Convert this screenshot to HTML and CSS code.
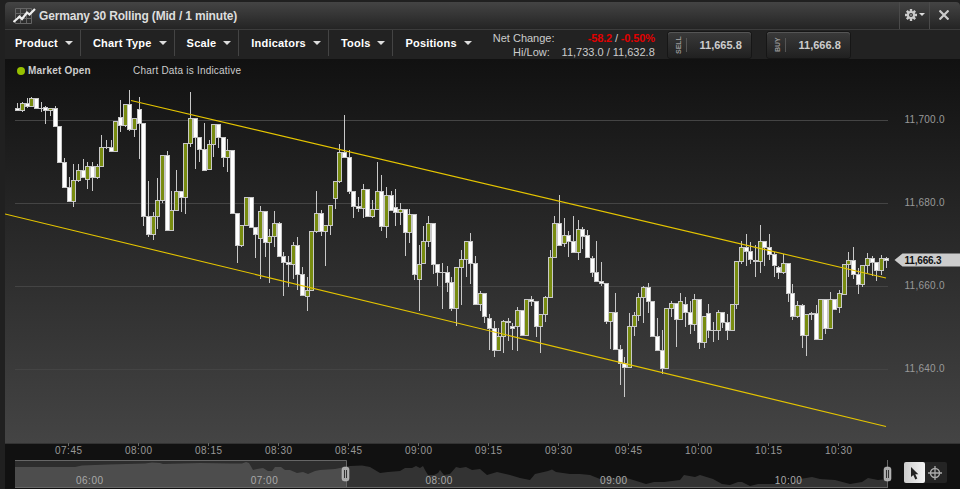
FILE: index.html
```html
<!DOCTYPE html>
<html lang="en">
<head>
    <meta charset="UTF-8">
    <meta name="viewport" content="width=device-width, initial-scale=1.0">
    <title>Germany 30 Rolling</title>
    <link rel="stylesheet" href="styles.css">
</head>
<body>
    <div class="window">
        <header class="titlebar">
            <svg class="logo" width="24" height="18" viewBox="0 0 24 18">
                <path d="M2.500 1.500h16v15h-16zM7.500 1v16M13.500 1v16M2 6.500h17M2 11.500h17" fill="none" stroke="#666"/>
                <path d="M0.500 15l4-3.500 2-2 2.500 2.500 5-6.500 2.500 2 5.500-5.500" fill="none" stroke="#eee" stroke-width="2.200"/>
            </svg>
            <h1>Germany 30 Rolling (Mid / 1 minute)</h1>
            <button class="title-button settings">
                <svg width="12" height="12" viewBox="-6 -6 12 12">
                    <path d="M0-6V6M-6 0H6M-4.200-4.200L4.200 4.200M4.200-4.200L-4.200 4.200" stroke="#ccc" stroke-width="2.400"/>
                    <circle r="4" fill="#ccc"/>
                    <circle r="2" fill="#333"/>
                    <circle r="0.800" fill="#ccc"/>
                </svg>
                <span class="caret small"></span>
            </button>
            <button class="title-button close">
                <svg width="10" height="10" viewBox="0 0 10 10">
                    <path d="M0.500 0.500l9 9M9.500 0.500l-9 9" stroke="#ccc" stroke-width="2.200"/>
                </svg>
            </button>
        </header>
        <div class="toolbar">
            <nav>
                <ul>
                    <li>Product<span class="caret"></span></li>
                    <li>Chart Type<span class="caret"></span></li>
                    <li>Scale<span class="caret"></span></li>
                    <li>Indicators<span class="caret"></span></li>
                    <li>Tools<span class="caret"></span></li>
                    <li>Positions<span class="caret"></span></li>
                </ul>
            </nav>
            <div class="summary">
                <span>Net Change:</span>
                <span class="change"><b>-58.2</b> / <b>-0.50%</b></span>
                <span class="hilo">Hi/Low:</span>
                <span>11,733.0 / 11,632.8</span>
            </div>
            <button class="price-button"><span class="side">SELL</span><span class="price">11,665.8</span></button>
            <button class="price-button"><span class="side">BUY</span><span class="price">11,666.8</span></button>
        </div>
        <main class="chart-area">
            <div class="status">
                <span class="dot"></span>
                <strong>Market Open</strong>
                <span class="note">Chart Data is Indicative</span>
            </div>
            <svg id="chart" width="955" height="353" viewBox="5 90 955 353"></svg>
        </main>
        <svg id="timeAxis" width="955" height="17" viewBox="5 443 955 17"></svg>
        <footer>
            <svg id="navigator" width="887" height="29" viewBox="5 460 887 29"></svg>
            <div class="modes">
                <button class="mode active">
                    <svg width="20" height="20" viewBox="0 0 20 20">
                        <path d="M7 4v10l2.300-2 2 4.500 2-1-2-4.200h3z" fill="#222"/>
                    </svg>
                </button>
                <button class="mode">
                    <svg width="20" height="20" viewBox="0 0 20 20">
                        <circle cx="10" cy="10" r="4.500" fill="none" stroke="#aaa" stroke-width="1.500"/>
                        <path d="M10 3v14M3 10h14" stroke="#aaa" stroke-width="1.300"/>
                    </svg>
                </button>
            </div>
        </footer>
    </div>
    <script src="chart.js"></script>
</body>
</html>
```
FILE: styles.css
```css
body {
    margin: 0;
    height: 489px;
    overflow: hidden;
    background: #202020;
    font-family: "Liberation Sans", Arial, sans-serif;
    font-size: 11px;
    color: #ccc;
}
button {
    font-family: inherit;
    padding: 0;
    border: none;
    color: inherit;
    cursor: pointer;
}
svg {
    display: block;
    flex: none;
}
.window {
    margin: 2px 0 0 5px;
    height: 487px;
    background: #111;
    border-radius: 4px 4px 0 0;
    overflow: hidden;
}
.titlebar {
    display: flex;
    align-items: center;
    height: 28px;
    box-sizing: border-box;
    border-bottom: 1px solid #3c3c3c;
    background: linear-gradient(#444, #242424);
}
.logo {
    margin-left: 8px;
}
h1 {
    flex: 1;
    margin: 0 0 0 2px;
    font-size: 12px;
    letter-spacing: -0.17px;
    color: #ddd;
    white-space: nowrap;
}
.title-button {
    display: flex;
    align-items: center;
    justify-content: center;
    gap: 2px;
    width: 30px;
    height: 27px;
    background: none;
    border-left: 1px solid #4a4a4a;
    box-sizing: border-box;
}
.title-button.close {
    width: 31px;
    padding: 0 3px 2px 0;
}
.title-button.settings {
    padding-bottom: 2px;
}
.caret {
    border: 4px solid transparent;
    border-top-color: #ddd;
    border-bottom: none;
}
.caret.small {
    border-width: 3px;
    border-bottom: none;
}
.toolbar {
    display: flex;
    height: 29px;
    background: #222;
}
nav ul {
    display: flex;
    list-style: none;
    margin: 0;
    padding: 0;
}
nav li {
    display: flex;
    align-items: center;
    gap: 7px;
    height: 26px;
    padding: 0 7px 0 12px;
    border-right: 1px solid #444;
    font-weight: bold;
    letter-spacing: 0.2px;
    color: #fff;
    white-space: nowrap;
}
nav li:first-child {
    padding-left: 10px;
}
nav li:last-child {
    border: none;
}
.summary {
    display: grid;
    grid-template-columns: 58px 104px;
    grid-auto-rows: 14px;
    width: 162px;
    margin: 1px 13px 0 14px;
    line-height: 14px;
    text-align: right;
    white-space: nowrap;
}
.summary b {
    color: #e00000;
}
.summary .change {
    letter-spacing: -0.15px;
}
.summary .hilo {
    padding-right: 1px;
}
.price-button {
    display: flex;
    align-items: center;
    width: 83px;
    height: 26px;
    margin: 2px 16px 0 0;
    border-radius: 3px;
    background: linear-gradient(#3a3a3a, #202020);
    box-shadow: inset 0 1px #555, 0 0 0 1px #161616;
}
.side {
    display: flex;
    align-items: center;
    justify-content: center;
    width: 12px;
    height: 14px;
    margin-left: 5px;
    padding-left: 1px;
    border-left: 1px solid #555;
    writing-mode: vertical-rl;
    transform: rotate(180deg);
    font-size: 7px;
    font-weight: bold;
    line-height: 8px;
    color: #999;
}
.price {
    flex: 1;
    padding-right: 9px;
    text-align: right;
    font-size: 11px;
    font-weight: bold;
    color: #ccc;
}
.chart-area {
    height: 384px;
    background: linear-gradient(#111, #444);
}
.status {
    display: flex;
    align-items: center;
    height: 31px;
    padding: 0 0 8px 12px;
    box-sizing: border-box;
    font-size: 10px;
    letter-spacing: 0.2px;
}
.dot {
    width: 8px;
    height: 8px;
    margin-right: 3px;
    border-radius: 50%;
    background: #96c000;
}
.status strong {
    width: 105px;
}
#timeAxis text, #navigator text, #chart text {
    font-size: 10px;
    fill: #999;
}
#navigator text {
    fill: #aaa;
}
#chart .last {
    font-weight: bold;
    fill: #111;
}
footer {
    display: flex;
    gap: 12px;
}
.modes {
    display: flex;
    width: 43px;
    height: 21px;
    margin-top: 2px;
    border-radius: 2px;
    background: #242424;
}
.mode {
    width: 21px;
    height: 21px;
    border-radius: 2px;
    background: none;
}
.mode.active {
    background: linear-gradient(90deg, #ccc, #f4f4f4);
}
```
FILE: chart.js
```js
// candles: wick top, body top, body bottom, wick bottom, 1 = up
const candles = [
    [103,108,110,110,0],[102,103,110,111,1],[98,103,106,107,0],[97,98,106,106,1],[98,98,108,108,0],
    [102,108,108,111,0],[106,107,110,123,0],[108,108,110,115,1],[106,108,126,126,0],[126,126,162,162,0],
    [158,162,187,187,0],[177,187,201,201,0],[164,180,201,206,1],[164,170,180,181,1],[159,170,177,177,0],
    [162,166,179,188,1],[162,166,177,190,0],[164,166,177,178,1],[135,147,166,166,1],[140,147,147,148,0],
    [140,147,151,151,0],[121,121,151,151,1],[100,117,125,131,0],[104,104,125,126,1],[90,104,129,130,0],
    [118,118,129,136,1],[97,109,123,158,0],[123,123,216,225,0],[181,216,234,236,0],[212,216,234,239,1],
    [178,200,216,228,1],[155,155,200,202,1],[151,155,230,230,0],[191,210,230,230,1],[170,191,210,210,1],
    [191,191,197,211,0],[143,143,197,213,1],[92,118,143,146,1],[118,118,137,168,0],[137,137,149,161,0],
    [123,149,170,170,0],[140,144,169,169,1],[124,124,144,156,1],[124,124,137,147,0],[137,137,157,166,0],
    [139,150,157,171,1],[150,150,213,213,0],[213,213,245,262,0],[225,225,245,246,1],[197,197,225,225,1],
    [197,197,227,227,0],[227,227,234,257,0],[206,211,238,278,1],[211,211,242,256,0],[229,236,242,282,1],
    [211,223,236,246,1],[222,223,256,256,0],[252,256,262,295,0],[256,262,264,286,0],[242,245,264,278,1],
    [237,245,274,289,0],[267,274,295,295,0],[277,290,296,310,1],[231,231,290,290,1],[191,213,231,232,1],
    [210,213,231,235,0],[225,225,231,265,1],[205,205,225,234,1],[181,181,198,208,1],[144,152,181,182,1],
    [115,152,157,157,0],[150,157,191,193,0],[191,191,206,217,0],[197,206,208,211,0],[184,189,208,217,1],
    [189,189,216,216,0],[200,209,216,217,1],[162,191,209,209,1],[175,191,226,230,0],[187,195,226,237,1],
    [191,195,210,210,0],[189,207,212,225,0],[203,209,212,224,1],[209,209,232,255,0],[209,214,232,242,1],
    [214,214,274,279,0],[245,264,279,310,1],[226,241,263,263,1],[216,223,241,246,1],[223,223,264,273,0],
    [264,264,272,285,0],[263,272,272,308,0],[266,272,282,291,0],[277,282,308,310,0],[267,267,308,325,1],
    [250,259,267,304,1],[241,241,259,276,1],[233,241,263,283,0],[256,263,304,304,0],[291,293,304,310,1],
    [293,293,316,322,0],[314,318,328,349,0],[321,328,350,356,0],[328,336,350,350,1],[320,321,336,352,1],
    [318,321,322,340,0],[323,326,328,349,0],[307,310,326,350,1],[310,310,335,335,0],[299,299,335,335,1],
    [296,299,301,305,0],[301,301,326,336,0],[314,314,326,352,1],[296,297,314,321,1],[250,257,297,297,1],
    [216,223,257,257,1],[195,223,245,245,0],[218,235,243,246,1],[231,235,241,256,0],[216,241,252,252,0],
    [220,229,252,259,1],[227,229,236,248,0],[230,235,257,257,0],[256,258,272,276,0],[241,272,281,281,0],
    [262,281,283,285,0],[283,283,321,323,0],[312,312,321,348,1],[293,312,349,349,0],[345,349,363,384,0],
    [357,363,367,396,0],[313,326,367,367,1],[312,315,326,335,1],[293,297,315,320,1],[286,287,297,322,1],
    [283,287,301,312,0],[301,301,336,336,0],[318,336,350,350,0],[330,350,368,373,0],[308,308,368,368,1],
    [301,303,308,316,1],[303,303,319,346,0],[293,301,319,319,1],[297,304,312,326,0],[301,312,324,333,0],
    [294,299,324,330,1],[299,299,342,348,0],[316,316,342,347,1],[304,313,330,337,0],[322,330,330,341,0],
    [310,312,330,339,1],[312,312,322,327,0],[314,322,330,339,0],[304,304,330,330,1],[261,261,304,308,1],
    [241,247,261,263,1],[234,247,251,265,0],[242,251,259,263,0],[245,260,261,276,0],[225,241,261,272,1],
    [241,241,247,265,0],[234,247,254,259,0],[252,254,265,276,0],[266,267,272,278,0],[254,263,272,273,1],
    [263,263,293,301,0],[284,293,316,319,0],[301,305,316,317,1],[304,305,335,347,0],[314,314,335,355,1],
    [312,313,314,319,0],[305,313,339,339,0],[299,299,339,339,1],[299,299,328,333,0],[292,299,328,328,1],
    [299,299,309,309,0],[290,293,307,312,1],[264,264,294,294,1],[252,260,264,276,1],[247,260,274,278,0],
    [268,274,284,293,0],[265,265,284,286,1],[253,258,265,272,1],[256,258,262,275,0],[262,262,270,280,0],
    [255,258,270,274,1],[257,258,260,267,0]
];

// price chart
let chart = '';
[['11,700.0', 120], ['11,680.0', 203], ['11,660.0', 286], ['11,640.0', 369]].forEach(([label, y]) => {
    chart += `<path d="M15 ${y + 0.5}H888" stroke="#444"/><text x="904.5" y="${y + 3}" textLength="40">${label}</text>`;
});
candles.forEach(([high, top, bottom, low, up], i) => {
    const x = Math.round(17.185 + 4.67 * i);
    chart += `<rect x="${x}" y="${high}" width="1" height="${low - high + 1}" fill="#c8c8c8"/>`;
    chart += `<rect x="${x - 2}" y="${top}" width="5" height="${bottom - top + 1}" fill="#c8c8c8"/>`;
    if (bottom - top > 1) {
        chart += `<rect x="${x - 1}" y="${top + 1}" width="3" height="${bottom - top - 1}" fill="${up ? '#788c10' : '#fff'}"/>`;
    }
});
chart += '<path d="M131 100.500L886 278M5 214L886 426.500" fill="none" stroke="#e4c400" stroke-width="1.100"/>';
chart += '<path d="M894.500 260l8-6.500H960v13H902.500z" fill="#ccc"/><text class="last" x="904.5" y="263.5" textLength="37">11,666.3</text>';
document.getElementById('chart').innerHTML = chart;

// time axis
let axis = '<path d="M5 443.500H960" stroke="#333"/>';
['07:45', '08:00', '08:15', '08:30', '08:45', '09:00', '09:15', '09:30', '09:45', '10:00', '10:15', '10:30'].forEach((time, i) => {
    const x = 68.5 + 70 * i;
    axis += `<path d="M${x} 443v3" stroke="#666"/><text x="${x}" y="454" text-anchor="middle" textLength="27">${time}</text>`;
});
document.getElementById('timeAxis').innerHTML = axis;

// range navigator
const overview = '15,467 75,467 82,465.5 108,464.5 145,463.5 152,462.5 160,463 163,464 200,463 230,463.5 242,463.5 246,462 249,463 253,470 257,469 263,468 268,471 272,471 275,467 281,467 285,470 290,470 297,473 303,472 308,474 315,471 320,470 335,469 345,467 350,466 362,465.5 370,467 380,473 388,472 400,471 405,468 412,468 416,466 420,468 423,466 425,470 428,475 434,475 438,473 440,470 444,475 450,474 456,467 460,468 466,467 472,470 480,469 487,475 497,472 510,475 520,478 530,480 535,474 548,471 552,469.5 556,472 570,474 580,474 590,475 600,479 610,477 615,479 622,477 630,479 646,484 654,482 664,482 672,481 680,480 684,475 695,477 700,475 713,479 722,484 730,485 738,482 742,482 750,486 758,484 775,484 790,484 800,479 812,477 820,479 835,480 850,484 862,482 868,478 878,480 887,479 887,488 15,488';
let nav = `<clipPath id="selected"><rect x="15" y="460" width="332" height="28"/></clipPath>
    <polygon points="${overview}" fill="#333"/>
    <g clip-path="url(#selected)"><rect x="15" y="460" width="332" height="28" fill="#2d2d2d"/><polygon points="${overview}" fill="#4d4d4d"/></g>
    <path d="M15 460.500H346.500V487M887.500 460V487M15 487.500H888" fill="none" stroke="#666"/>`;
['06:00', '07:00', '08:00', '09:00', '10:00'].forEach((time, i) => {
    nav += `<text x="${89.5 + 174.7 * i}" y="484" text-anchor="middle" textLength="27">${time}</text>`;
});
[345.5, 887.5].forEach(x => {
    nav += `<rect x="${x - 3.5}" y="467" width="7" height="14" rx="2.500" fill="#aaa" stroke="#ccc" stroke-width="0.500"/>
        <path d="M${x - 1} 470v8M${x + 1} 470v8" stroke="#333"/>`;
});
document.getElementById('navigator').innerHTML = nav;
```
